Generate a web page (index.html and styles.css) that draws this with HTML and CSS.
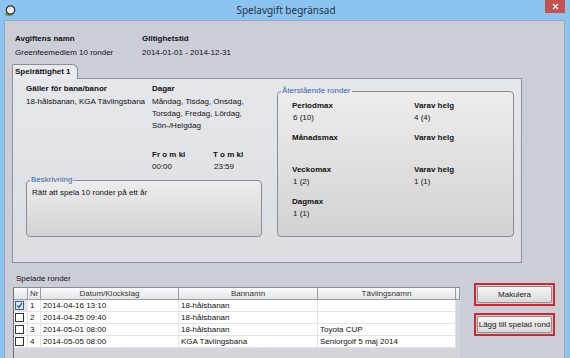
FILE: index.html
```html
<!DOCTYPE html>
<html lang="sv">
<head>
<meta charset="UTF-8">
<title>Spelavgift begränsad</title>
<link rel="stylesheet" href="styles.css">
</head>
<body>

<div class="window">
  <!-- titelrad -->
  <div class="titlebar">
    <svg class="app-icon" width="11" height="11" viewBox="0 0 11 11">
      <ellipse cx="4" cy="9" rx="4" ry="2" fill="#6f9a3c"/>
      <circle cx="5.5" cy="5" r="4.2" fill="#f4f4f4" stroke="#2f2f2f" stroke-width="1.2"/>
      <circle cx="4.5" cy="4" r="1.2" fill="#d8d8d8"/>
    </svg>
    <div class="title">Spelavgift begränsad</div>
    <div class="close">
      <svg width="7" height="7" viewBox="0 0 7 7">
        <path d="M1 1 L6 6 M6 1 L1 6" stroke="#fff" stroke-width="1.4"/>
      </svg>
    </div>
  </div>

  <div class="client">
    <div class="fee-info">
      <div class="field">
        <div class="label">Avgiftens namn</div>
        <div class="value">Greenfeemedlem 10 ronder</div>
      </div>
      <div class="field">
        <div class="label">Giltighetstid</div>
        <div class="value">2014-01-01 - 2014-12-31</div>
      </div>
    </div>

    <div class="tabs">
      <div class="tab active">Spelrättighet 1</div>
    </div>

    <div class="tab-panel">
      <div class="col-left">
        <div class="course-days">
          <div class="field">
            <div class="label">Gäller för bana/banor</div>
            <div class="value">18-hålsbanan, KGA Tävlingsbana</div>
          </div>
          <div class="field">
            <div class="label">Dagar</div>
            <div class="value">Måndag, Tisdag, Onsdag,<br>Torsdag, Fredag, Lördag,<br>Sön-/Helgdag</div>
          </div>
        </div>

        <div class="times">
          <div class="field">
            <div class="label">Fr o m kl</div>
            <div class="value">00:00</div>
          </div>
          <div class="field">
            <div class="label">T o m kl</div>
            <div class="value indent">23:59</div>
          </div>
        </div>

        <fieldset class="group desc">
          <legend>Beskrivning</legend>
          <p>Rätt att spela 10 ronder på ett år</p>
        </fieldset>
      </div>

      <fieldset class="group remaining">
        <legend>Återstående ronder</legend>
        <div class="limits">
          <div class="field"><div class="label">Periodmax</div><div class="value indent">6 (10)</div></div>
          <div class="field"><div class="label">Varav helg</div><div class="value">4 (4)</div></div>
          <div class="field"><div class="label">Månadsmax</div><div class="value"></div></div>
          <div class="field"><div class="label">Varav helg</div><div class="value"></div></div>
          <div class="field"><div class="label">Veckomax</div><div class="value indent">1 (2)</div></div>
          <div class="field"><div class="label">Varav helg</div><div class="value">1 (1)</div></div>
          <div class="field"><div class="label">Dagmax</div><div class="value indent">1 (1)</div></div>
        </div>
      </fieldset>
    </div>

    <div class="bottom">
      <div class="played">
        <div class="played-label">Spelade ronder</div>
        <div class="grid-box">
          <table class="rounds">
            <colgroup>
              <col class="c-check"><col class="c-nr"><col class="c-date"><col class="c-course"><col class="c-comp"><col class="c-end">
            </colgroup>
            <thead>
              <tr><th></th><th class="left">Nr</th><th>Datum/Klockslag</th><th>Bannamn</th><th>Tävlingsnamn</th><th></th></tr>
            </thead>
            <tbody>
              <tr><td class="sel"><span class="cb checked"><svg width="7" height="7" viewBox="0 0 7 7"><path d="M1 3.5 L3 5.5 L6 1" fill="none" stroke="#2b5fb0" stroke-width="1.4"/></svg></span></td><td>1</td><td>2014-04-16 13:10</td><td>18-hålsbanan</td><td></td><td class="end"></td></tr>
              <tr><td><span class="cb"></span></td><td>2</td><td>2014-04-25 09:40</td><td>18-hålsbanan</td><td></td><td class="end"></td></tr>
              <tr><td><span class="cb"></span></td><td>3</td><td>2014-05-01 08:00</td><td>18-hålsbanan</td><td>Toyota CUP</td><td class="end"></td></tr>
              <tr><td><span class="cb"></span></td><td>4</td><td>2014-05-05 08:00</td><td>KGA Tävlingsbana</td><td>Seniorgolf 5 maj 2014</td><td class="end"></td></tr>
            </tbody>
          </table>
        </div>
      </div>

      <div class="actions">
        <div class="highlight"><button>Makulera</button></div>
        <div class="highlight"><button>Lägg till spelad rond</button></div>
      </div>
    </div>
  </div>
</div>

</body>
</html>
```

FILE: styles.css
```css
* {
  box-sizing: border-box;
}

body {
  margin: 0;
  width: 570px;
  height: 358px;
  overflow: hidden;
  font-family: "Liberation Sans", Arial, sans-serif;
  font-size: 8px;
  color: #111;
}

/* fönsterram */
.window {
  height: 358px;
  display: flex;
  flex-direction: column;
  background-color: #8bc3f1;
  padding: 0 5px 0 4px;
}

.titlebar {
  height: 20px;
  flex: none;
  display: flex;
  align-items: flex-start;
}

.app-icon {
  margin: 5px 0 0 1px;
}

.title {
  flex: 1;
  padding-left: 11px;
  text-align: center;
  font-family: "Noto Sans", sans-serif;
  font-size: 10px;
  line-height: 20px;
  color: #263240;
}

.close {
  width: 20px;
  height: 13px;
  display: flex;
  align-items: center;
  justify-content: center;
  background-color: #c75050;
}

.client {
  flex: 1;
  background-color: #cbced6;
  border: 1px solid #9ea7b3;
  border-bottom: none;
  padding-top: 12px;
}

/* fält: rubrik + värde */
.label {
  font-weight: bold;
  line-height: 12px;
}

.value {
  line-height: 12px;
  min-height: 12px;
}

.value.indent {
  padding-left: 1px;
}

.fee-info {
  display: grid;
  grid-template-columns: 127px 1fr;
  padding-left: 10px;
}

.fee-info .value {
  margin-top: 2px;
}

/* flikar */
.tabs {
  display: flex;
  margin: 5px 0 0 7px;
}

.tab {
  width: 66px;
  height: 15px;
  margin-bottom: -1px;
  padding-left: 2px;
  position: relative;
  z-index: 1;
  font-weight: bold;
  line-height: 13px;
  background-color: #e9eaee;
  border: 1px solid #8a8e96;
  border-bottom: none;
  border-radius: 2px 6px 0 0;
}

.tab-panel {
  width: 510px;
  height: 185px;
  margin-left: 7px;
  display: grid;
  grid-template-columns: 236px 237px;
  column-gap: 15px;
  padding: 4px 7px 25px 13px;
  border: 1px solid #8e9199;
  background: linear-gradient(#e6e7eb, #dbdde2);
}

.col-left {
  display: flex;
  flex-direction: column;
}

.course-days {
  display: grid;
  grid-template-columns: 126px 1fr;
}

.course-days .value {
  margin-top: 1px;
}

.times {
  display: grid;
  grid-template-columns: 61px 1fr;
  padding-left: 126px;
  margin-top: 17px;
}

/* gruppramar */
.group {
  margin: 0;
  padding: 0;
  min-width: 0;
  border: 1px solid #8d8d8d;
  border-radius: 4px;
  background: linear-gradient(#ededed, #d2d2d2);
}

.group legend {
  margin-left: 3px;
  padding: 0 1px;
  line-height: 10px;
  color: #3c66ab;
}

.desc {
  flex: 1;
  margin-top: 2px;
}

.desc p {
  margin: 2px 0 0 5px;
  line-height: 12px;
}

.remaining {
  margin-top: 3px;
}

.limits {
  display: grid;
  grid-template-columns: 122px 1fr;
  row-gap: 8px;
  padding: 4px 0 0 14px;
}

/* nedre delen */
.bottom {
  display: flex;
  align-items: flex-start;
}

.played {
  width: 447px;
  margin: 10px 0 0 8px;
}

.played-label {
  padding-left: 3px;
  line-height: 12px;
  margin-bottom: 2px;
}

.grid-box {
  height: 80px;
  border-left: 1px solid #6f6f6f;
  border-top: 1px solid #8a8a8a;
  background-color: #d4d6db;
}

.rounds {
  width: 446px;
  table-layout: fixed;
  border-collapse: separate;
  border-spacing: 0;
}

.c-check { width: 14px; }
.c-nr { width: 13px; }
.c-date { width: 138px; }
.c-course { width: 139px; }
.c-comp { width: 138px; }
.c-end { width: 4px; }

.rounds th {
  height: 12px;
  padding: 0;
  font-weight: normal;
  line-height: 11px;
  color: #333;
  background: linear-gradient(#fbfbfc, #e2e4e7);
  border-right: 1px solid #9b9da2;
  border-bottom: 1px solid #9b9da2;
}

.rounds th.left {
  text-align: left;
  padding-left: 2px;
}

.rounds td {
  height: 12px;
  padding: 0 0 0 2px;
  line-height: 11px;
  white-space: nowrap;
  overflow: hidden;
  background-color: #fff;
  border-right: 1px solid #e4e4e4;
  border-bottom: 1px solid #e4e4e4;
}

.rounds td:first-child {
  padding-left: 1px;
}

.rounds td.end {
  background-color: transparent;
  border: none;
}

.rounds td.sel {
  background-color: #e3e3e3;
}

.cb {
  display: flex;
  align-items: center;
  justify-content: center;
  width: 9px;
  height: 9px;
  border: 1px solid #333;
  background-color: #fff;
}

.cb.checked {
  border-color: #3a5f94;
  background-color: #dce9f8;
}

/* knappar */
.actions {
  margin: 20px 9px 0 auto;
  display: flex;
  flex-direction: column;
  gap: 7px;
}

.highlight {
  padding: 1px;
  border: 2px solid #cf2631;
}

.highlight button {
  display: block;
  width: 75px;
  height: 17px;
  padding: 0;
  font-family: "Liberation Sans", Arial, sans-serif;
  font-size: 8px;
  color: #222;
  border: 1px solid #8c8c8c;
  border-radius: 2px;
  background: linear-gradient(#f5f5f5, #dadada);
}
```
